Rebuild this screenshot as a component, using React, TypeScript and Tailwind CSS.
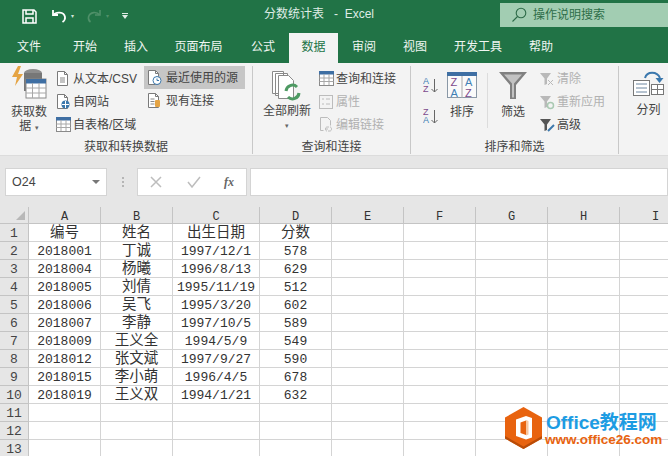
import type { ReactNode } from 'react'

const cjk = "font-['Liberation_Sans','Noto_Sans_CJK_SC',sans-serif]"
const mono = "font-['Liberation_Mono','Noto_Sans_CJK_SC',monospace]"

const tabs = [
  { name: '文件', w: 'w-[58px]' },
  { name: '开始', w: 'w-[54px]' },
  { name: '插入', w: 'w-[48px]' },
  { name: '页面布局', w: 'w-[77px]' },
  { name: '公式', w: 'w-[52px]' },
  { name: '数据', w: 'w-[49px]', active: true },
  { name: '审阅', w: 'w-[52px]' },
  { name: '视图', w: 'w-[50px]' },
  { name: '开发工具', w: 'w-[76px]' },
  { name: '帮助', w: 'w-[50px]' },
]

const rows = [
  ['编号', '姓名', '出生日期', '分数'],
  ['2018001', '丁诚', '1997/12/1', '578'],
  ['2018004', '杨曦', '1996/8/13', '629'],
  ['2018005', '刘倩', '1995/11/19', '512'],
  ['2018006', '吴飞', '1995/3/20', '602'],
  ['2018007', '李静', '1997/10/5', '589'],
  ['2018009', '王义全', '1994/5/9', '549'],
  ['2018012', '张文斌', '1997/9/27', '590'],
  ['2018015', '李小萌', '1996/4/5', '678'],
  ['2018019', '王义双', '1994/1/21', '632'],
  [],
  [],
  [],
]

const columns = ['A', 'B', 'C', 'D', 'E', 'F', 'G', 'H', 'I']

function DocIcon({ children }: { children?: ReactNode }) {
  return (
    <svg width="17" height="17" viewBox="0 0 17 17" fill="none">
      <path d="M2.5 1.5h7l3 3v11h-10z" fill="#fff" stroke="#7a7a7a" />
      <path d="M9.5 1.5v3h3" stroke="#7a7a7a" />
      {children}
    </svg>
  )
}

function TableIcon({ size = 17, className = '' }: { size?: number; className?: string }) {
  return (
    <svg className={className} width={size} height={size} viewBox="0 0 17 17" fill="none">
      <rect x="1.5" y="1.5" width="14" height="14" fill="#fff" stroke="#8a8a8a" />
      <rect x="1" y="1" width="15" height="3.5" fill="#3f6fa3" />
      <path d="M1.5 8h14M1.5 11.5h14M6 4v11M11 4v11" stroke="#a8a8a8" />
    </svg>
  )
}

function SmallBtn({
  icon,
  label,
  disabled,
  active,
  iconWidth = 'w-[18px]',
}: {
  icon: ReactNode
  label: string
  disabled?: boolean
  active?: boolean
  iconWidth?: string
}) {
  return (
    <div
      className={`flex items-center h-[23px] whitespace-nowrap ${active ? 'bg-[#c6c6c6]' : ''} ${
        disabled ? 'text-[#b1b1b1]' : 'text-[#444]'
      }`}
    >
      <span className={`flex ${iconWidth} justify-center shrink-0`}>{icon}</span>
      <span className="ml-[1px]">{label}</span>
    </div>
  )
}

function GroupLabel({ children }: { children: ReactNode }) {
  return <div className="h-[16px] text-center leading-[18px] text-[#444] whitespace-nowrap">{children}</div>
}

function SortSmall({ flip }: { flip?: boolean }) {
  return (
    <svg width="16" height="18" viewBox="0 0 16 18" fill="none">
      <text x="0" y="8" fontSize="9" fontFamily="Liberation Sans" fill={flip ? '#7d4a8c' : '#3f7fb5'}>
        {flip ? 'Z' : 'A'}
      </text>
      <text x="0" y="16" fontSize="9" fontFamily="Liberation Sans" fill={flip ? '#3f7fb5' : '#7d4a8c'}>
        {flip ? 'A' : 'Z'}
      </text>
      <path d="M11.500 3v13M8.500 13l3 3 3-3" stroke="#666" />
    </svg>
  )
}

function FilterGlyph({ color = '#8f8f8f' }: { color?: string }) {
  return <path d="M1 2h11L8 7.5V13L5.5 14V7.5z" fill={color} />
}

function Hexagon() {
  return (
    <svg width="37" height="42" viewBox="0 0 37 42">
      <path d="M18.500 0L37 10.500v21L18.500 42 0 31.500v-21z" fill="#e8630f" />
      <path d="M18.500 42L0 31.500v-2.500l18.500 10.500L37 29v2.500z" fill="#b94c08" />
      <path d="M21 9l-10 3.500v16.500l10 3.500 6-2V11z" fill="#fff" />
      <path d="M21 13.500l-5.500 2v10.500l5.500 2z" fill="#e8630f" />
      <path d="M21 13v15.500l2.500-1V14z" fill="#f7c6a0" />
    </svg>
  )
}

export default function App() {
  return (
    <div className={`relative w-[668px] h-[456px] overflow-hidden bg-white text-[12px] ${cjk}`}>
      {/* title bar */}
      <div className="flex h-[33px] bg-[#217346] text-[#dfece5]">
        <div className="flex items-center pl-[22px] w-[264px] h-[32px]">
          <svg width="15" height="15" viewBox="0 0 15 15" fill="none" stroke="#fff" strokeWidth="1.5">
            <path d="M1 1h11l2 2v11H1z" />
            <path d="M4 1v4h7V1M4 14V9h7v5" />
          </svg>
          <svg className="ml-[14px]" width="16" height="14" viewBox="0 0 16 14" fill="none" stroke="#fff" strokeWidth="1.8">
            <path d="M2 1v5h5" />
            <path d="M2.5 6C5 2.5 13 2.5 14 8c.3 2-1 4-2.5 5" />
          </svg>
          <span className="ml-[4px] text-[6px] text-[#cfe3d7]">▾</span>
          <svg className="ml-[13px]" width="15" height="14" viewBox="0 0 15 14" fill="none" stroke="#4f9069" strokeWidth="1.6">
            <path d="M13 1v5H8" />
            <path d="M12.5 6C10 2.5 3 2.5 1.5 8c-.3 2 .5 4 2 5" />
          </svg>
          <span className="ml-[4px] text-[6px] text-[#4f9069]">▾</span>
          <div className="ml-[13px] flex flex-col items-center gap-[1px]">
            <div className="w-[6px] h-[1px] bg-[#dfece5]" />
            <div className="w-0 h-0 border-x-[3px] border-t-[4px] border-x-transparent border-t-[#dfece5]" />
          </div>
        </div>
        <div className="w-[236px] h-[30px] leading-[29px] text-[12px] whitespace-pre">分数统计表   -  Excel</div>
        <div className="flex items-center mt-[3px] h-[24px] flex-1 bg-[#a2cdb2] text-[#2e6d49] pl-[11px]">
          <svg width="16" height="16" viewBox="0 0 16 16" fill="none" stroke="#2c6a47" strokeWidth="1.1">
            <circle cx="10" cy="6" r="4.8" />
            <path d="M6.5 9.5L1.5 14.5" />
          </svg>
          <span className="ml-[6px]">操作说明搜索</span>
        </div>
      </div>

      {/* tabs */}
      <div className="flex h-[30px] bg-[#217346] text-[#f0f6f2]">
        {tabs.map((t) => (
          <div
            key={t.name}
            className={`${t.w} text-center leading-[28px] ${t.active ? 'bg-[#f3f3f3] text-[#217346]' : ''}`}
          >
            {t.name}
          </div>
        ))}
      </div>

      {/* ribbon */}
      <div className="flex h-[93px] bg-[#f3f3f3] border-b border-[#dcdcdc]">
        {/* 获取和转换数据 */}
        <div className="flex flex-col w-[253px] mt-[3px] mb-[1px] border-r border-[#c8c8c8]">
          <div className="flex h-[72px]">
            <div className="w-[54px] flex flex-col items-center pl-[4px] text-[#444] leading-[14px]">
              <svg width="36" height="35" viewBox="0 0 36 35" fill="none">
                <path d="M7 0L1 11h5l-2 9 8-12H7l3-8z" fill="#e5a444" />
                <ellipse cx="22" cy="7" rx="9" ry="4" fill="#8d8d8d" />
                <path d="M13 7v18h18V7z" fill="#777" />
                <rect x="15" y="13" width="20" height="19" fill="#fff" stroke="#8a8a8a" />
                <rect x="15" y="13" width="20" height="4.5" fill="#3f6fa3" />
                <path d="M15 22h20M15 27h20M21.5 17v15M28 17v15" stroke="#a8a8a8" />
              </svg>
              <div className="mt-[4px] whitespace-nowrap">获取数</div>
              <div className="whitespace-nowrap">
                据 <span className="text-[7px] text-[#666]">▾</span>
              </div>
            </div>
            <div className="w-[90px] pt-[1px]">
              <SmallBtn icon={<DocIcon><path d="M5 8h5M5 10h5M5 12h5" stroke="#888" /></DocIcon>} label="从文本/CSV" />
              <SmallBtn icon={<DocIcon><circle cx="10.5" cy="11.5" r="4" fill="#3b78ad" /><path d="M7 11.5h7M10.5 8v7" stroke="#fff" /></DocIcon>} label="自网站" />
              <SmallBtn icon={<TableIcon />} label="自表格/区域" />
            </div>
            <div className="w-[101px]">
              <SmallBtn
                active
                iconWidth="w-[21px]"
                icon={<DocIcon><circle cx="11" cy="11.5" r="4" fill="#fff" stroke="#3b78ad" /><path d="M11 9.5v2h2" stroke="#3b78ad" /></DocIcon>}
                label="最近使用的源"
              />
              <SmallBtn iconWidth="w-[21px]" icon={<DocIcon><path d="M4.5 7h4M4.5 9.5h4M4.5 12h4" stroke="#888" /><rect x="9" y="8" width="5" height="7" rx="1" fill="#e5a444" /></DocIcon>} label="现有连接" />
            </div>
          </div>
          <GroupLabel>获取和转换数据</GroupLabel>
        </div>

        {/* 查询和连接 */}
        <div className="flex flex-col w-[158px] mt-[3px] mb-[1px] border-r border-[#c8c8c8]">
          <div className="flex h-[72px]">
            <div className="w-[64px] flex flex-col items-center pl-[4px] pt-[4px] text-[#444] leading-[14px]">
              <svg width="32" height="31" viewBox="0 0 32 31" fill="none">
                <path d="M1.500 1.500h11v22h-11zM4.500 3.500h12v22h-12z" fill="#fff" stroke="#8a8a8a" />
                <path d="M7.500 5.500h10l5 5v18h-15z" fill="#fff" stroke="#8a8a8a" />
                <path d="M15 21a6.500 6.500 0 0 1 11-4" stroke="#4e9a63" strokeWidth="3" />
                <path d="M28 23a6.500 6.500 0 0 1-11 4" stroke="#4e9a63" strokeWidth="3" />
              </svg>
              <div className="mt-[3px] whitespace-nowrap">全部刷新</div>
              <div className="text-[7px] text-[#666] leading-[16px]">▾</div>
            </div>
            <div className="pt-[1px]">
              <SmallBtn icon={<TableIcon />} label="查询和连接" />
              <SmallBtn disabled icon={<svg width="16" height="16" viewBox="0 0 16 16" fill="none" stroke="#bcbcbc"><rect x="1.500" y="1.500" width="13" height="13" /><path d="M4 5h2M4 10h2M8 5h4M8 10h4" /></svg>} label="属性" />
              <SmallBtn disabled icon={<svg width="16" height="17" viewBox="0 0 16 17" fill="none" stroke="#bcbcbc"><path d="M2.500 1.500h7l3 3v5M2.500 1.500v13h3" /><path d="M7 13h3M12 11c2 0 2 4 0 4h-2M9 15c-2 0-2-4 0-4h2" /></svg>} label="编辑链接" />
            </div>
          </div>
          <GroupLabel>查询和连接</GroupLabel>
        </div>

        {/* 排序和筛选 */}
        <div className="flex flex-col w-[208px] mt-[3px] mb-[1px] border-r border-[#c8c8c8]">
          <div className="flex h-[72px]">
            <div className="w-[33px] pl-[12px] pt-[10px] flex flex-col gap-[13px] shrink-0">
              <SortSmall />
              <SortSmall flip />
            </div>
            <div className="w-[36px] flex flex-col items-center pt-[6px] text-[#444] shrink-0">
              <svg width="30" height="26" viewBox="0 0 30 26" fill="none">
                <rect x="0.500" y="0.500" width="29" height="25" fill="#fafafa" stroke="#8a98a6" />
                <rect x="0" y="0" width="30" height="4" fill="#3f6fa3" />
                <path d="M15 4v22" stroke="#a8a8a8" />
                <text x="3.500" y="14" fontSize="11" fontFamily="Liberation Sans" fill="#7d4a8c">Z</text>
                <text x="3.500" y="24.500" fontSize="11" fontFamily="Liberation Sans" fill="#3f7fb5">A</text>
                <text x="18" y="14" fontSize="11" fontFamily="Liberation Sans" fill="#3f7fb5">A</text>
                <text x="18" y="24.500" fontSize="11" fontFamily="Liberation Sans" fill="#7d4a8c">Z</text>
              </svg>
              <div className="mt-[5px] whitespace-nowrap">排序</div>
            </div>
            <div className="w-[1px] h-[55px] mt-[7px] ml-[7px] bg-[#dcdcdc] shrink-0" />
            <div className="w-[50px] flex flex-col items-center pt-[6px] text-[#444] shrink-0">
              <svg width="28" height="27" viewBox="0 0 28 27" fill="none">
                <path d="M0 0h28L17 13v14h-6V13z" fill="#808080" />
                <path d="M5 2.500h18l-8 9v14h-2v-14z" fill="#c2c2c2" />
              </svg>
              <div className="mt-[4px] whitespace-nowrap">筛选</div>
            </div>
            <div className="pt-[1px]">
              <SmallBtn disabled icon={<svg width="16" height="16" viewBox="0 0 16 16" fill="none"><FilterGlyph color="#b9b9b9" /><path d="M9 9l5 5M14 9l-5 5" stroke="#b9b9b9" /></svg>} label="清除" />
              <SmallBtn disabled icon={<svg width="16" height="16" viewBox="0 0 16 16" fill="none"><FilterGlyph color="#b9b9b9" /><circle cx="11.500" cy="11.500" r="3" stroke="#a9c9b2" strokeWidth="1.500" /></svg>} label="重新应用" />
              <SmallBtn icon={<svg width="16" height="16" viewBox="0 0 16 16" fill="none"><FilterGlyph color="#555" /><path d="M9 14l6-6" stroke="#3b78ad" strokeWidth="2" /></svg>} label="高级" />
            </div>
          </div>
          <GroupLabel>排序和筛选</GroupLabel>
        </div>

        {/* 分列 */}
        <div className="flex flex-col items-center w-[49px] pl-[10px] pt-[7px] text-[#444] shrink-0">
          <svg width="31" height="27" viewBox="0 0 31 27" fill="none">
            <path d="M12 8c2-7 12-7 15 0" stroke="#3b78ad" strokeWidth="2" />
            <path d="M22.500 8h8l-4 5z" fill="#3b78ad" />
            <rect x="0.500" y="10.500" width="16" height="15" fill="#fff" stroke="#777" />
            <path d="M3 14h11M3 18h11M3 22h11" stroke="#6c86a0" />
            <rect x="18.500" y="14.500" width="12" height="10" fill="#fff" stroke="#777" />
            <path d="M18.500 19.500h12M24.500 14.500v10" stroke="#777" />
          </svg>
          <div className="mt-[4px] whitespace-nowrap">分列</div>
        </div>
      </div>

      {/* formula bar */}
      <div className="flex items-start h-[51px] bg-[#e6e6e6] pt-[12px] text-[#444]">
        <div className="flex items-center justify-between ml-[5px] w-[102px] h-[28px] bg-white border border-[#d4d4d4] pl-[6px] pr-[6px] text-[12.500px]">
          <span>O24</span>
          <div className="w-0 h-0 border-x-[4px] border-t-[4px] border-x-transparent border-t-[#777]" />
        </div>
        <div className="flex flex-col gap-[2px] mt-[9px] ml-[15px] w-[2px]">
          <div className="w-[2px] h-[2px] bg-[#b5b5b5]" />
          <div className="w-[2px] h-[2px] bg-[#b5b5b5]" />
          <div className="w-[2px] h-[2px] bg-[#b5b5b5]" />
        </div>
        <div className="flex items-center ml-[13px] w-[110px] h-[28px] bg-white border border-[#d4d4d4]">
          <svg className="ml-[12px]" width="12" height="12" viewBox="0 0 12 12" stroke="#bdbdbd" strokeWidth="1.500">
            <path d="M1 1l10 10M11 1L1 11" />
          </svg>
          <svg className="ml-[25px]" width="14" height="12" viewBox="0 0 14 12" fill="none" stroke="#bdbdbd" strokeWidth="1.500">
            <path d="M1 6l4 5 8-10" />
          </svg>
          <span className="ml-[23px] font-['Liberation_Serif',serif] italic font-bold text-[12px] text-[#666]">fx</span>
        </div>
        <div className="ml-[3px] flex-1 h-[28px] bg-white border border-[#d4d4d4]" />
      </div>

      {/* sheet */}
      <div className="grid grid-cols-[29px_72px_72px_87px_72px_72px_72px_72px_72px_72px] auto-rows-[18px]">
        <div className="h-[17px] bg-[#e6e6e6] border-r border-b border-[#c4c4c4] relative overflow-hidden">
          <div className="absolute right-[3px] bottom-[3px] w-0 h-0 border-l-[9px] border-b-[9px] border-l-transparent border-b-[#b8b8b8]" />
        </div>
        {columns.map((c) => (
          <div
            key={c}
            className={`h-[17px] bg-[#e6e6e6] border-r border-b border-[#c4c4c4] text-center leading-[20px] text-[12px] text-[#333] ${mono}`}
          >
            {c}
          </div>
        ))}
        {rows.map((row, i) => (
          <div key={i} className="contents">
            <div className={`-mt-[1px] h-[18px] bg-[#e6e6e6] border-r border-b border-[#c4c4c4] text-center leading-[19px] text-[13px] text-[#444] ${mono}`}>
              {i + 1}
            </div>
            {columns.map((c, j) => (
              <div
                key={c}
                className={`-mt-[1px] h-[18px] border-r border-b border-[#d4d4d4] text-center whitespace-nowrap text-[#333] ${
                  row[j] && /\d/.test(row[j]) ? `leading-[19px] text-[13px] ${mono}` : `leading-[17px] text-[14.500px] ${cjk}`
                }`}
              >
                {row[j]}
              </div>
            ))}
          </div>
        ))}
      </div>

      {/* watermark */}
      <div className="absolute left-[505px] top-[407px] flex">
        <Hexagon />
        <div className="ml-[3px] mt-[5px] flex flex-col whitespace-nowrap font-bold">
          <span className="ml-[1px] text-[19px] leading-[21px] text-[#1d9ce3]">Office教程网</span>
          <span className="text-[13.500px] leading-[15px] mt-[-1px] text-[#e8630f]">www.office26.com</span>
        </div>
      </div>
    </div>
  )
}
